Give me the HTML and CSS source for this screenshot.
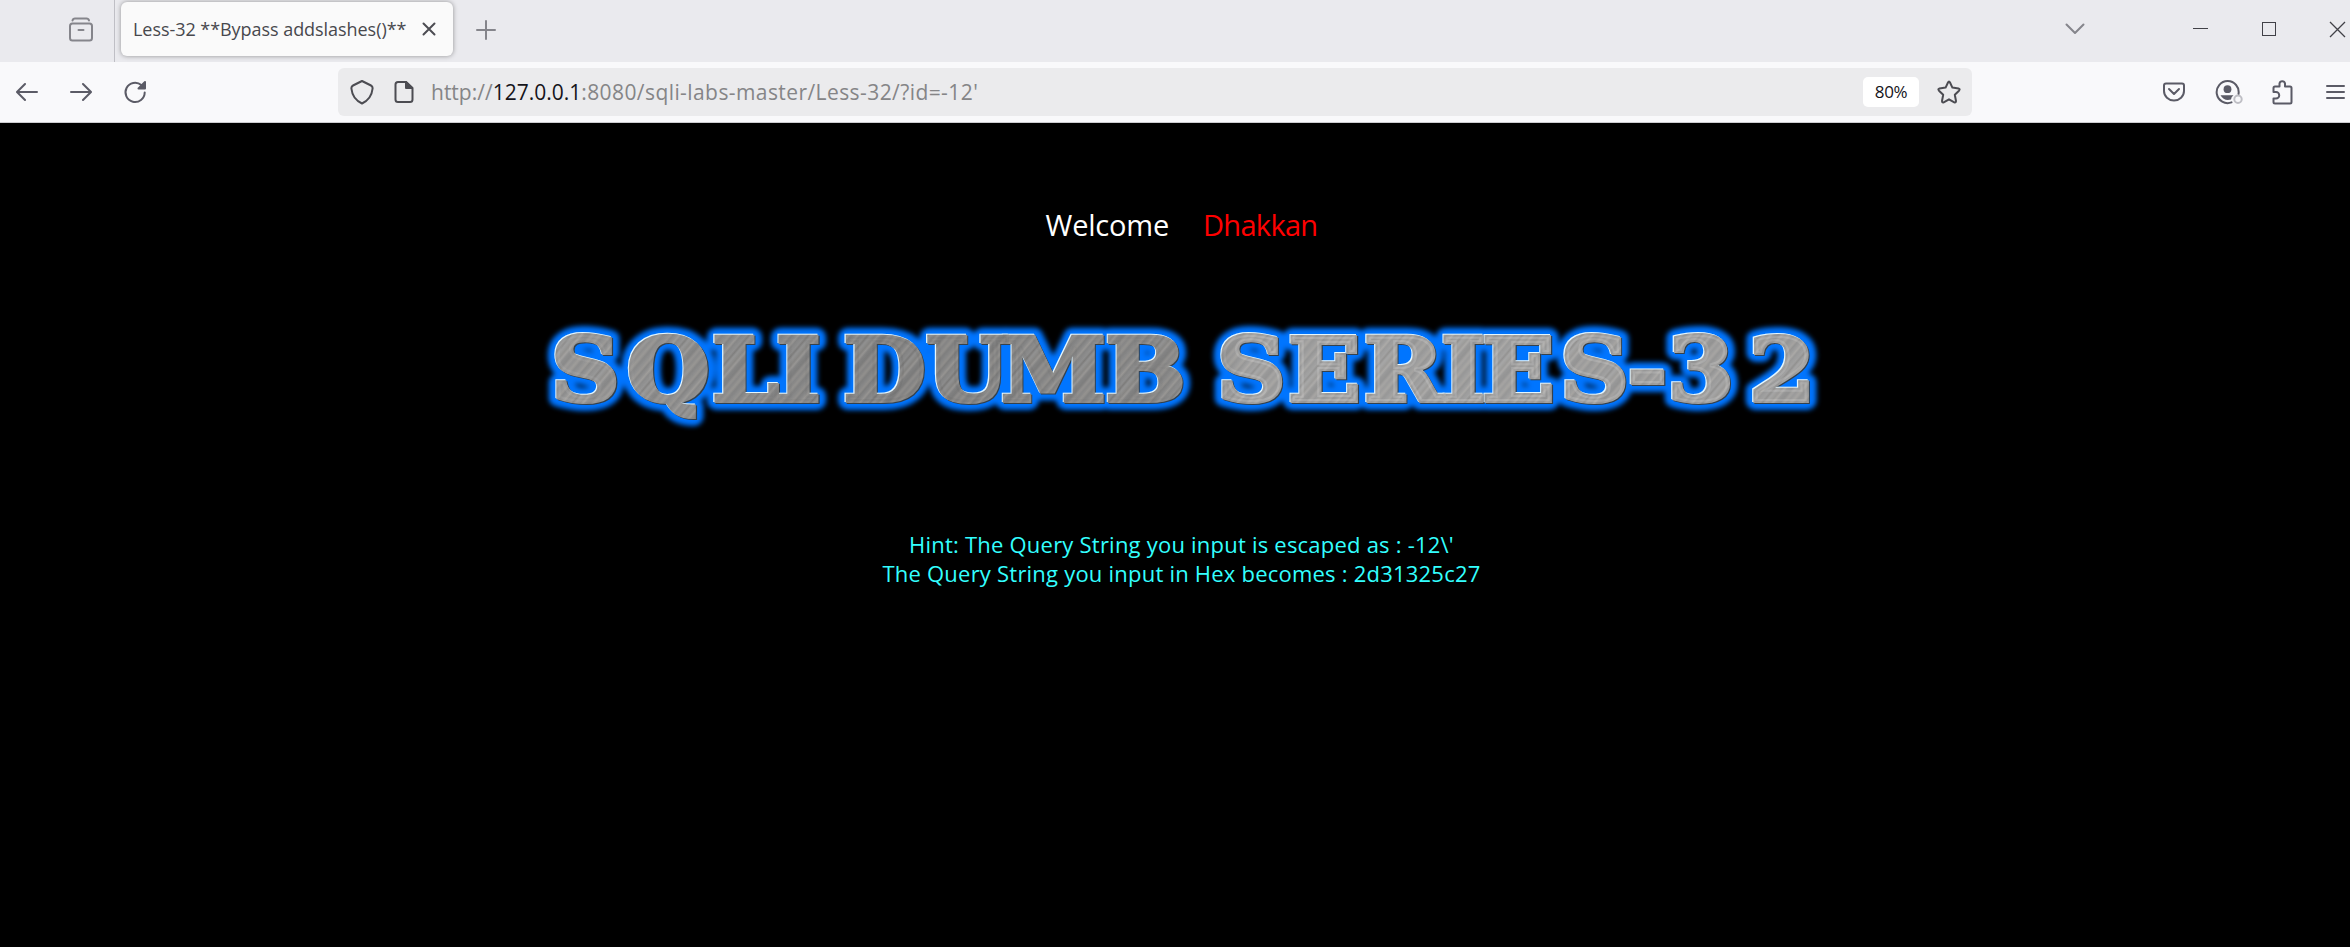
FILE: index.html
```html
<!DOCTYPE html>
<html lang="en">
<head>
<meta charset="utf-8">
<title>Less-32 **Bypass addslashes()**</title>
<link rel="stylesheet" href="styles.css">
</head>
<body>
<header class="tabbar">
  <div class="view-slot">
    <svg width="26" height="26" viewBox="0 0 26 26" class="ic muted"><path d="M4.500 3.500Q5 1.500 7 1.500H18.500Q20.500 1.500 21 3.500"/><rect x="2" y="6.500" width="22" height="17" rx="2.500"/><path d="M10.500 13h5"/></svg>
  </div>
  <div class="tab">
    <span class="tab-title">Less-32 **Bypass addslashes()**</span>
    <svg width="14" height="14" viewBox="0 0 14 14" class="ic dark"><path d="M1.500 1.500l11 11M12.500 1.500l-11 11"/></svg>
  </div>
  <svg width="20" height="20" viewBox="0 0 20 20" class="ic muted new-tab"><path d="M10 1v18M1 10h18"/></svg>
  <div class="window-controls">
    <svg width="20" height="12" viewBox="0 0 20 12" class="ic muted"><path d="M1.500 1.500L10 10l8.500-8.500"/></svg>
    <svg width="15" height="2" viewBox="0 0 15 2" class="minimize"><path d="M0 .5h15"/></svg>
    <svg width="14" height="14" viewBox="0 0 14 14" class="maximize"><rect x=".5" y=".5" width="13" height="13"/></svg>
    <svg width="17" height="17" viewBox="0 0 17 17" class="close"><path d="M1 1l15 15M16 1L1 16"/></svg>
  </div>
</header>
<nav class="toolbar">
  <div class="nav-buttons">
    <svg width="22" height="20" viewBox="0 0 22 20" class="ic"><path d="M21 10H1.500M9 2l-8 8 8 8"/></svg>
    <svg width="22" height="20" viewBox="0 0 22 20" class="ic"><path d="M1 10h19.500M13 2l8 8-8 8"/></svg>
    <svg width="24" height="24" viewBox="0 0 24 24" class="ic reload"><path d="M18.300 5.100A9.600 9.600 0 1 0 21.700 12.500"/><path class="solid" d="M22 2v6.500H15.500z"/></svg>
  </div>
  <div class="urlbar">
    <svg width="24" height="26" viewBox="0 0 24 26" class="ic dark shield"><path d="M12 2L21 6.500Q23 7.500 22.500 10Q21.500 20 12 24.500Q2.500 20 1.500 10Q1 7.500 3 6.500z"/></svg>
    <svg width="20" height="24" viewBox="0 0 20 24" class="ic dark page"><path d="M12 2H4Q1.500 2 1.500 4.500V19.500Q1.500 22 4 22H16Q18.500 22 18.500 19.500V8z"/><path class="solid" d="M12 2v6h6z"/></svg>
    <span class="url">http://<b>127.0.0.1</b><span class="path">:8080/sqli-labs-master/Less-32/?id=-12'</span></span>
    <span class="zoom">80%</span>
    <svg width="24" height="24" viewBox="0 0 24 24" class="ic dark"><path d="M11 2.500Q12 .5 13 2.500L15.400 7.600 21.500 8.400Q23.500 9 22 10.700L17.800 14.800 19 21Q19 23 17.300 22.300L12 19.300 6.700 22.300Q5 23 5 21L6.200 14.800 2 10.700Q.5 9 2.500 8.400L8.600 7.600z"/></svg>
  </div>
  <div class="actions">
    <svg width="22" height="20" viewBox="0 0 22 20" class="ic pocket"><path d="M3 1.500H19Q21 1.500 21 3.500V9A10 9.500 0 0 1 1 9V3.500Q1 1.500 3 1.500zM6 7l5 5 5-5"/></svg>
    <svg width="28" height="26" viewBox="0 0 28 26" class="ic account"><path d="M23.500 15A11 11 0 1 0 16.500 23.400"/><circle class="solid face" cx="12.500" cy="10.200" r="3.900"/><path class="solid face" d="M5.500 16.200H18.500Q16 18 16 20.500Q9 22.500 5.500 16.200z"/><circle class="badge" cx="23" cy="20.200" r="3.700"/></svg>
    <svg width="21" height="26" viewBox="0 0 21 26" class="ic puzzle"><path d="M1.500 13V9Q1.500 7.500 3 7.500H7.500V4.500A2.800 2.800 0 0 1 13 4.500V7.500H18Q19.500 7.500 19.500 9V23Q19.500 24.500 18 24.500H3Q1.500 24.500 1.500 23V19.500H4A3 3 0 0 0 4 13z"/></svg>
    <svg width="19" height="16" viewBox="0 0 19 16" class="ic menu"><path d="M1 2h17M1 8h17M1 14h17"/></svg>
  </div>
</nav>
<main class="content">
  <h1 class="welcome"><span class="greet">Welcome</span><span class="name">Dhakkan</span></h1>
  <svg class="banner" width="1320" height="130" viewBox="520 310 1320 130">
    <defs>
      <linearGradient id="brush">
        <stop offset="0" stop-color="#8d8d8d"/><stop offset=".06" stop-color="#979592"/><stop offset=".1" stop-color="#828282"/>
        <stop offset=".17" stop-color="#8f8f8f"/><stop offset=".21" stop-color="#9e9c99"/><stop offset=".25" stop-color="#888"/>
        <stop offset=".34" stop-color="#929292"/><stop offset=".38" stop-color="#807f7e"/><stop offset=".43" stop-color="#989898"/>
        <stop offset=".51" stop-color="#8a8987"/><stop offset=".56" stop-color="#9e9c9a"/><stop offset=".6" stop-color="#878787"/>
        <stop offset=".68" stop-color="#808080"/><stop offset=".74" stop-color="#979593"/><stop offset=".8" stop-color="#898989"/>
        <stop offset=".87" stop-color="#999794"/><stop offset=".93" stop-color="#848484"/><stop offset="1" stop-color="#8d8d8d"/>
      </linearGradient>
      <pattern id="metal" width="43" height="43" patternUnits="userSpaceOnUse" patternTransform="rotate(38)"><rect width="43" height="43" fill="url(#brush)"/></pattern>
      <linearGradient id="sheen" gradientUnits="userSpaceOnUse" x1="505" y1="0" x2="1661" y2="0">
        <stop offset="0" stop-color="#fff" stop-opacity=".08"/><stop offset=".28" stop-color="#000" stop-opacity=".05"/><stop offset=".45" stop-color="#000" stop-opacity=".02"/><stop offset=".55" stop-color="#fff" stop-opacity=".16"/><stop offset="1" stop-color="#fff" stop-opacity=".14"/>
      </linearGradient>
      <filter id="soft" filterUnits="userSpaceOnUse" x="470" y="310" width="1230" height="130"><feGaussianBlur stdDeviation="2.400"/></filter>
      <text id="lettering" y="400" x="537.200 613.200 684 732.600 765 811.500 887.600 966.500 1051 1100 1148.200 1215.100 1287.700 1342.700 1393.100 1463 1511.500 1560.500 1635">SQLI DUMB SERIES-32</text>
    </defs>
    <g transform="translate(4 1) scale(1.09 1)">
      <use href="#lettering" class="glow" filter="url(#soft)"/>
      <use href="#lettering" class="shade" x="1" y="1"/>
      <use href="#lettering" class="light" x="-1" y="-1"/>
      <use href="#lettering" class="face-metal"/>
      <use href="#lettering" class="face-sheen"/>
    </g>
  </svg>
  <p class="hint">Hint: The Query String you input is escaped as : -12\'</p>
  <p class="hint hex">The Query String you input in Hex becomes : 2d31325c27</p>
</main>
</body>
</html>
```
FILE: styles.css
```css
* { box-sizing: border-box; }
body { margin: 0; background: #000; font-family: "Open Sans", "Noto Sans", sans-serif; overflow: hidden; width: 2350px; height: 947px; }
svg { flex: none; display: block; }
.ic { fill: none; stroke: #5b5b66; stroke-width: 2; stroke-linecap: round; stroke-linejoin: round; }
.muted { stroke: #85858b; }
.dark { stroke: #4c4c52; }
.solid { fill: #5b5b66; }
.dark .solid { fill: #4c4c52; }
.tabbar { height: 62px; background: #eaeaee; display: flex; align-items: flex-start; }
.view-slot { width: 115px; height: 62px; border-right: 1px solid #bfbfc5; padding: 17px 0 0 68px; }
.tab { margin: 2px 0 0 6px; width: 332px; height: 54px; border-radius: 6px; background: #fafafa; box-shadow: 0 0 5px rgba(0,0,0,.38); display: flex; align-items: center; justify-content: space-between; padding: 0 17px 0 12px; }
.tab-title { font-size: 18px; color: #48484d; white-space: nowrap; letter-spacing: -.05px; }
.new-tab { margin: 20px 0 0 23px; }
.window-controls { margin-left: auto; display: flex; align-items: center; height: 58px; padding-right: 4px; }
.window-controls path, .window-controls rect { fill: none; }
.minimize, .maximize, .close { stroke: #414147; stroke-width: 1; }
.close { stroke-width: 1.3; }
.minimize { margin-left: 108px; }
.maximize { margin-left: 54px; }
.close { margin-left: 53px; }
.toolbar { height: 61px; background: #f9f9fb; border-bottom: 1px solid #ccccd0; display: flex; align-items: center; }
.nav-buttons { width: 338px; display: flex; align-items: center; padding-left: 16px; gap: 32px; }
.reload { margin-left: -1px; }
.urlbar { width: 1634px; height: 48px; border-radius: 6px; background: #ebebed; display: flex; align-items: center; padding: 0 11px 0 12px; }
.page { margin-left: 20px; }
.url { margin-left: 17px; font-size: 21px; color: #858587; white-space: nowrap; }
.url b { font-weight: 400; color: #15141a; }
.path { letter-spacing: .42px; }
.zoom { margin: 0 18px 0 auto; width: 56px; height: 30px; border-radius: 5px; background: #fff; color: #15141a; font-size: 17px; line-height: 30px; text-align: center; letter-spacing: -.4px; }
.actions { display: flex; align-items: center; padding-left: 191px; }
.account { margin-left: 30px; }
.account .face { stroke: none; }
.account .badge { stroke: #bebec4; }
.puzzle { margin-left: 29px; }
.menu { margin-left: 33px; }
.content { display: flex; flex-direction: column; align-items: center; padding: 81px 0 0 13px; }
.welcome { margin: 0; display: flex; gap: 34px; font-size: 29px; line-height: 42px; font-weight: 400; }
.greet { color: #fff; letter-spacing: -.2px; }
.name { color: #f00; letter-spacing: -.7px; }
.banner { margin: 64px 0 0 -12px; font-family: "DejaVu Serif", serif; font-weight: 700; font-size: 87px; text-anchor: middle; }
.glow { fill: #0074ff; stroke: #0074ff; stroke-width: 18px; stroke-linejoin: round; }
.shade { fill: #34414d; stroke: #34414d; stroke-width: 4px; }
.light { fill: #e4f7ff; stroke: #e4f7ff; stroke-width: 4px; }
.face-metal { fill: url(#metal); stroke: url(#metal); stroke-width: 4px; }
.face-sheen { fill: url(#sheen); stroke: url(#sheen); stroke-width: 4px; paint-order: stroke; }
.hint { margin: 90px 0 0; color: #3ff; font-size: 22px; line-height: 29px; white-space: nowrap; letter-spacing: .22px; }
.hex { margin: 0; }
```
